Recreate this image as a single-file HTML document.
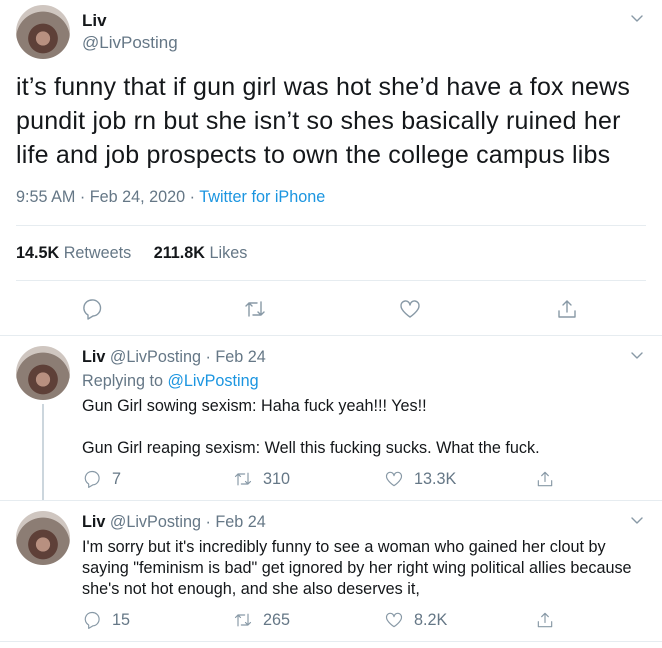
<!DOCTYPE html>
<html><head><meta charset="utf-8"><style>
body{margin:0;width:662px;height:648px;background:#fff;font-family:"Liberation Sans",Arial,sans-serif;color:#14171a;position:relative;overflow:hidden}
.a{position:absolute;white-space:nowrap}
.av{position:absolute;width:54px;height:54px;border-radius:50%;background:radial-gradient(circle at 50% 62%,#b89080 0 16%,#5e4038 17% 34%,#8c7d74 35% 62%,#cfc6c0 63%)}
.g{color:#657786}
.b{color:#1b95e0}
.hr{position:absolute;left:16px;right:16px;height:1px;background:#e6ecf0}
svg{position:absolute;fill:none;stroke:#8899a6;stroke-width:1.4;stroke-linecap:round;stroke-linejoin:round}
.t15{font-size:16.2px}
</style></head><body>
<div class="av" style="left:16px;top:5px"></div>
<div class="a" style="left:82px;top:11px;font-size:17px;font-weight:bold">Liv</div>
<div class="a g" style="left:82px;top:33px;font-size:17px">@LivPosting</div>
<svg style="left:630px;top:12px" width="14" height="14" viewBox="0 0 14 14"><path d="M2 4l5 5 5-5"/></svg>
<div class="a" style="left:16px;top:70px;font-size:25px;letter-spacing:0.2px;line-height:34px;width:636px;white-space:normal">it’s funny that if gun girl was hot she’d have a fox news pundit job rn but she isn’t so shes basically ruined her life and job prospects to own the college campus libs</div>
<div class="a g t15" style="left:16px;top:188px">9:55 AM · Feb 24, 2020 · <span class="b">Twitter for iPhone</span></div>
<div class="hr" style="top:225px"></div>
<div class="a t15" style="left:16px;top:244px"><b>14.5K</b> <span class="g">Retweets</span> &nbsp;&nbsp;&nbsp; <b>211.8K</b> <span class="g">Likes</span></div>
<div class="hr" style="top:280px"></div>
<svg style="left:80px;top:297px" width="24" height="24" viewBox="0 0 24 24"><path d="M12 3a8 8 0 0 1 1 16l-5 3v-4A8 8 0 0 1 12 3z"/></svg>
<svg style="left:243px;top:297px" width="24" height="24" viewBox="0 0 24 24"><path d="M6 19V6h8M3 9l3-3 3 3M18 5v13h-8M15 15l3 3 3-3"/></svg>
<svg style="left:398px;top:297px" width="24" height="24" viewBox="0 0 24 24"><path d="M12 20S3 14 3 9a4.5 4.5 0 0 1 9-1 4.5 4.5 0 0 1 9 1c0 5-9 11-9 11z"/></svg>
<svg style="left:555px;top:297px" width="24" height="24" viewBox="0 0 24 24"><path d="M12 15V4M8 8l4-4 4 4M4 14v6h16v-6"/></svg>
<div class="a" style="left:0;right:0;top:335px;height:1px;background:#e6ecf0"></div>

<div class="av" style="left:16px;top:346px"></div>
<div class="a" style="left:42px;top:404px;width:2px;height:96px;background:#ccd6dd"></div>
<div class="a t15" style="left:82px;top:348px"><b>Liv</b> <span class="g">@LivPosting · Feb 24</span></div>
<svg style="left:630px;top:349px" width="14" height="14" viewBox="0 0 14 14"><path d="M2 4l5 5 5-5"/></svg>
<div class="a t15 g" style="left:82px;top:372px">Replying to <span class="b">@LivPosting</span></div>
<div class="a t15" style="left:82px;top:396px;line-height:21px;width:560px;white-space:normal">Gun Girl sowing sexism: Haha fuck yeah!!! Yes!!<br><br>Gun Girl reaping sexism: Well this fucking sucks. What the fuck.</div>
<svg style="left:82px;top:469px" width="20" height="20" viewBox="0 0 24 24"><path d="M12 3a8 8 0 0 1 1 16l-5 3v-4A8 8 0 0 1 12 3z"/></svg>
<div class="a t15 g" style="left:112px;top:470px">7</div>
<svg style="left:233px;top:469px" width="20" height="20" viewBox="0 0 24 24"><path d="M6 19V6h8M3 9l3-3 3 3M18 5v13h-8M15 15l3 3 3-3"/></svg>
<div class="a t15 g" style="left:263px;top:470px">310</div>
<svg style="left:384px;top:469px" width="20" height="20" viewBox="0 0 24 24"><path d="M12 20S3 14 3 9a4.5 4.5 0 0 1 9-1 4.5 4.5 0 0 1 9 1c0 5-9 11-9 11z"/></svg>
<div class="a t15 g" style="left:414px;top:470px">13.3K</div>
<svg style="left:535px;top:469px" width="20" height="20" viewBox="0 0 24 24"><path d="M12 15V4M8 8l4-4 4 4M4 14v6h16v-6"/></svg>
<div class="a" style="left:0;right:0;top:500px;height:1px;background:#e6ecf0"></div>

<div class="av" style="left:16px;top:511px"></div>
<div class="a t15" style="left:82px;top:513px"><b>Liv</b> <span class="g">@LivPosting · Feb 24</span></div>
<svg style="left:630px;top:514px" width="14" height="14" viewBox="0 0 14 14"><path d="M2 4l5 5 5-5"/></svg>
<div class="a t15" style="left:82px;top:537px;line-height:21px;width:560px;white-space:normal">I'm sorry but it's incredibly funny to see a woman who gained her clout by saying "feminism is bad" get ignored by her right wing political allies because she's not hot enough, and she also deserves it,</div>
<svg style="left:82px;top:610px" width="20" height="20" viewBox="0 0 24 24"><path d="M12 3a8 8 0 0 1 1 16l-5 3v-4A8 8 0 0 1 12 3z"/></svg>
<div class="a t15 g" style="left:112px;top:611px">15</div>
<svg style="left:233px;top:610px" width="20" height="20" viewBox="0 0 24 24"><path d="M6 19V6h8M3 9l3-3 3 3M18 5v13h-8M15 15l3 3 3-3"/></svg>
<div class="a t15 g" style="left:263px;top:611px">265</div>
<svg style="left:384px;top:610px" width="20" height="20" viewBox="0 0 24 24"><path d="M12 20S3 14 3 9a4.5 4.5 0 0 1 9-1 4.5 4.5 0 0 1 9 1c0 5-9 11-9 11z"/></svg>
<div class="a t15 g" style="left:414px;top:611px">8.2K</div>
<svg style="left:535px;top:610px" width="20" height="20" viewBox="0 0 24 24"><path d="M12 15V4M8 8l4-4 4 4M4 14v6h16v-6"/></svg>
<div class="a" style="left:0;right:0;top:641px;height:1px;background:#e6ecf0"></div>
</body></html>
